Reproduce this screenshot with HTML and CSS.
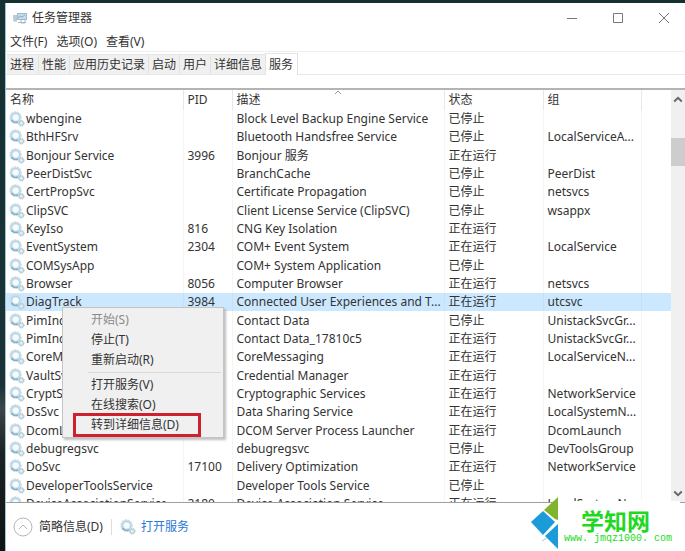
FILE: index.html
```
<!DOCTYPE html>
<html lang="zh-CN">
<head>
<meta charset="utf-8">
<title>任务管理器</title>
<link rel="stylesheet" href="styles.css">
</head>
<body>
<svg class="defs" aria-hidden="true">
  <symbol id="gears" viewBox="0 0 16 16">
    <circle cx="6.500" cy="6.500" r="5.600" fill="#dcebf3" stroke="#c6dae4" stroke-width="1.200" stroke-dasharray="2 1"/>
    <circle cx="6.500" cy="6.500" r="4.300" fill="none" stroke="#b9d5e3" stroke-width="1.400"/>
    <circle cx="6.800" cy="6.500" r="2.800" fill="#f6fbfd"/>
    <path d="M2.500 9A5 5 0 0 0 9 11" fill="none" stroke="#86aec4" stroke-width="1.500"/>
    <circle cx="12.300" cy="12.300" r="2.700" fill="#c4dae5" stroke="#a3bfcd" stroke-width="1" stroke-dasharray="1.400 .8"/>
    <circle cx="12.300" cy="12.300" r="1.200" fill="#e6f1f6"/>
  </symbol>
</svg>
<main class="window">
  <header class="titlebar">
    <svg class="app-icon" viewBox="0 0 14 12" aria-hidden="true">
      <path d="M0 3h4v7H1z" fill="#d0dde5"/>
      <path d="M1 3v6M3 3v6" stroke="#a3b8c5" stroke-width="1"/>
      <rect x="4.500" y="1.500" width="9" height="6" fill="#c4dcec" stroke="#a3b9c7"/>
      <path d="M5 6l2-2 2 1 3-2" fill="none" stroke="#86b0cd"/>
      <path d="M5 10.500h8M8 8v3h4V8" fill="none" stroke="#a9b9c4"/>
    </svg>
    <h1 class="title">任务管理器</h1>
    <div class="caption-buttons">
      <button class="caption" aria-label="最小化"><svg viewBox="0 0 12 12"><path d="M1 6.500h10"/></svg></button>
      <button class="caption" aria-label="最大化"><svg viewBox="0 0 12 12"><path d="M1.500 1.500h9v9h-9z"/></svg></button>
      <button class="caption" aria-label="关闭"><svg viewBox="0 0 12 12"><path d="M1 1l10 10M11 1L1 11"/></svg></button>
    </div>
  </header>
  <nav class="menubar">
    <button>文件(F)</button><button>选项(O)</button><button>查看(V)</button>
  </nav>
  <div class="tabs" role="tablist">
    <button role="tab">进程</button><button role="tab">性能</button><button role="tab">应用历史记录</button><button role="tab">启动</button><button role="tab">用户</button><button role="tab">详细信息</button><button role="tab" class="active" aria-selected="true">服务</button>
  </div>
  <section class="list">
    <div class="viewport">
      <table class="services">
        <colgroup><col class="c-name"><col class="c-pid"><col class="c-desc"><col class="c-state"><col class="c-group"><col></colgroup>
        <thead><tr><th>名称</th><th>PID</th><th class="sorted">描述<svg class="sort" viewBox="0 0 8 5" aria-hidden="true"><path d="M1 4l3-3 3 3"/></svg></th><th>状态</th><th>组</th><th class="rest"></th></tr></thead>
        <tbody id="rows"></tbody>
      </table>
      <div class="context-menu" role="menu">
        <button role="menuitem" disabled>开始(S)</button>
        <button role="menuitem">停止(T)</button>
        <button role="menuitem">重新启动(R)</button>
        <hr>
        <button role="menuitem">打开服务(V)</button>
        <button role="menuitem">在线搜索(O)</button>
        <button role="menuitem" class="marked">转到详细信息(D)</button>
      </div>
    </div>
    <div class="scrollbar">
      <button aria-label="向上滚动"><svg viewBox="0 0 8 6"><path d="M1 5l3-3 3 3"/></svg></button>
      <div class="thumb"></div>
      <button aria-label="向下滚动"><svg viewBox="0 0 8 6"><path d="M1 1l3 3 3-3"/></svg></button>
    </div>
  </section>
  <footer class="footer">
    <button class="fewer"><svg viewBox="0 0 20 20" aria-hidden="true"><circle cx="10" cy="10" r="9"/><path d="M6 12l4-4 4 4"/></svg>简略信息(D)</button>
    <a class="open" href="#"><svg class="gear" aria-hidden="true"><use href="#gears"/></svg>打开服务</a>
  </footer>
  <aside class="watermark">
    <svg viewBox="0 0 27 54" aria-hidden="true">
      <path d="M27 0v23l-3-1-11-9z" fill="#7fb42d"/>
      <path d="M12 14l12 11-12 13L0 25z" fill="#1b9cd8"/>
      <path d="M27 27v25L14 39z" fill="#1b9cd8"/>
      <path d="M11 44l5-3" stroke="#b9c3c8" stroke-width="1"/>
    </svg>
    <div class="brand"><strong>学知网</strong><span>www. jmqz1000. com</span></div>
  </aside>
</main>
<script src="app.js"></script>
</body>
</html>
```
FILE: app.js
```
const STOPPED = '已停止', RUNNING = '正在运行';
const services = [
  ['wbengine', '', 'Block Level Backup Engine Service', STOPPED, ''],
  ['BthHFSrv', '', 'Bluetooth Handsfree Service', STOPPED, 'LocalServiceA...'],
  ['Bonjour Service', '3996', 'Bonjour 服务', RUNNING, ''],
  ['PeerDistSvc', '', 'BranchCache', STOPPED, 'PeerDist'],
  ['CertPropSvc', '', 'Certificate Propagation', STOPPED, 'netsvcs'],
  ['ClipSVC', '', 'Client License Service (ClipSVC)', STOPPED, 'wsappx'],
  ['KeyIso', '816', 'CNG Key Isolation', RUNNING, ''],
  ['EventSystem', '2304', 'COM+ Event System', RUNNING, 'LocalService'],
  ['COMSysApp', '', 'COM+ System Application', STOPPED, ''],
  ['Browser', '8056', 'Computer Browser', RUNNING, 'netsvcs'],
  ['DiagTrack', '3984', 'Connected User Experiences and T...', RUNNING, 'utcsvc'],
  ['PimInde', '', 'Contact Data', STOPPED, 'UnistackSvcGr...'],
  ['PimInde', '', 'Contact Data_17810c5', RUNNING, 'UnistackSvcGr...'],
  ['CoreMe', '', 'CoreMessaging', RUNNING, 'LocalServiceN...'],
  ['VaultSvc', '', 'Credential Manager', RUNNING, ''],
  ['CryptSvc', '', 'Cryptographic Services', RUNNING, 'NetworkService'],
  ['DsSvc', '', 'Data Sharing Service', RUNNING, 'LocalSystemN...'],
  ['DcomLa', '', 'DCOM Server Process Launcher', RUNNING, 'DcomLaunch'],
  ['debugregsvc', '', 'debugregsvc', STOPPED, 'DevToolsGroup'],
  ['DoSvc', '17100', 'Delivery Optimization', RUNNING, 'NetworkService'],
  ['DeveloperToolsService', '', 'Developer Tools Service', STOPPED, ''],
  ['DeviceAssociationService', '2180', 'Device Association Service', RUNNING, 'LocalSystemN...']
];
const gear = '<svg class="gear" aria-hidden="true"><use href="#gears"/></svg>';
document.getElementById('rows').innerHTML = services.map(([name, ...rest]) =>
  `<tr${name === 'DiagTrack' ? ' class="selected"' : ''}><td><span class="name">${gear}${name}</span></td>` +
  rest.map(v => `<td>${v}</td>`).join('') + '<td class="rest"></td></tr>').join('');
```
FILE: styles.css
```
* { box-sizing: border-box; }
body {
  margin: 0;
  height: 100vh;
  padding: 3px 0 0 5px;
  overflow: hidden;
  background: linear-gradient(#15302f, #1b3337 70%, #3c4548 74%, #1d2224 82%, #101314);
  font: 12px/18px "Noto Sans", "Noto Sans CJK SC", sans-serif;
  color: #333;
}
button { border: 0; padding: 0; background: none; font: inherit; color: inherit; }
svg { flex: none; }
.defs { position: absolute; width: 0; height: 0; }
.window {
  position: relative;
  display: flex;
  flex-direction: column;
  height: 100%;
  background: #fff;
  border-left: 1px solid #9fc3d6;
}
.titlebar { display: flex; align-items: center; height: 29px; padding-left: 7px; gap: 5px; }
.app-icon { width: 14px; height: 12px; }
.title { margin: 0; font-size: 12px; font-weight: 400; }
.caption-buttons { display: flex; margin: 0 -2px 0 auto; }
.caption { width: 46px; height: 29px; display: grid; place-items: center; }
.caption svg { width: 12px; height: 12px; fill: none; stroke: #777; }
.menubar { display: flex; gap: 9px; height: 20px; padding-left: 4px; border-bottom: 1px solid #eee; }
.tabs { display: flex; align-items: flex-end; height: 23px; border-bottom: 1px solid #e8e8e8; padding-left: 1px; }
.tabs button { height: 20px; padding: 0 4px 0 3px; background: #f0f0f0; border-top: 1px solid #e6e6e6; }
.tabs button + button { border-left: 1px solid #e2e2e2; padding-right: 3px; }
.tabs .active { height: 22px; padding-right: 4px; margin-bottom: -1px; background: #fff; border-right: 1px solid #e2e2e2; }
.list { display: flex; flex: 1; min-height: 0; margin-top: 13px; border-top: 2px solid #b4b4b4; border-bottom: 1px solid #a0a0a0; }
.viewport { position: relative; flex: 1; overflow: clip; }
.services { width: 100%; table-layout: fixed; border-collapse: collapse; }
.c-name { width: 177px; }
.c-pid { width: 49px; }
.c-desc { width: 212px; }
.c-state { width: 99px; }
.c-group { width: 98px; }
th, td { padding: 0 0 0 4px; border-right: 1px solid #f5f5f5; text-align: left; font-weight: 400; white-space: nowrap; }
.rest { border: 0; }
th { height: 20px; border-color: #e8e8e8; }
.sorted { position: relative; }
.sort { position: absolute; top: 0; left: 50%; width: 8px; height: 5px; margin-left: -4px; fill: none; stroke: #999; }
td { height: 18px; line-height: 18px; }
td:first-child { padding-left: 3px; }
tr:nth-child(3n) td { height: 19px; }
.name { display: flex; align-items: center; height: 18px; gap: 1px; overflow: hidden; }
.gear { width: 16px; height: 16px; }
.selected td { background: #cce8ff; border-color: #c4e1fa; }
.context-menu {
  position: absolute;
  top: 217px;
  left: 56px;
  width: 162px;
  padding: 2px;
  background: #f0f0f0;
  border: 1px solid #c4c4c4;
  box-shadow: 2px 2px 2px #8888;
}
.context-menu button { display: block; width: 124px; height: 20px; margin-left: 10px; padding-left: 16px; text-align: left; }
.context-menu button:disabled { color: #8a8a8a; }
.context-menu hr { margin: 2px 0 2px 23px; border: 0; border-top: 1px solid #d9d9d9; }
.context-menu .marked { outline: 3px solid #cf202e; outline-offset: -1px; }
.scrollbar { display: flex; flex-direction: column; width: 14px; background: #f0f0f0; }
.scrollbar button { height: 17px; display: grid; place-items: center; }
.scrollbar button:last-child { margin-top: auto; }
.scrollbar svg { width: 10px; height: 8px; fill: none; stroke: #666; stroke-width: 1.5; }
.thumb { height: 28px; margin-top: 31px; background: #cdcdcd; }
.footer { display: flex; align-items: center; height: 48px; padding-left: 7px; gap: 8px; }
.fewer { display: flex; align-items: center; gap: 6px; }
.fewer svg { width: 20px; height: 20px; fill: none; stroke: #b5b5b5; }
.open { display: flex; align-items: center; gap: 5px; padding-left: 8px; border-left: 1px solid #ddd; line-height: 12px; color: #2b78d8; text-decoration: none; }
.watermark { position: absolute; right: 5px; bottom: 0; display: flex; align-items: flex-end; }
.watermark svg { width: 27px; height: 54px; }
.brand { width: 122px; height: 50px; padding: 7px 0 0 6px; background: #fff; color: #1fd81f; display: flex; flex-direction: column; }
.brand strong { margin-left: 17px; font: 700 23px/24px "Noto Sans CJK SC", sans-serif; }
.brand span { font: 10px/14px "Liberation Mono", monospace; white-space: nowrap; }
```
